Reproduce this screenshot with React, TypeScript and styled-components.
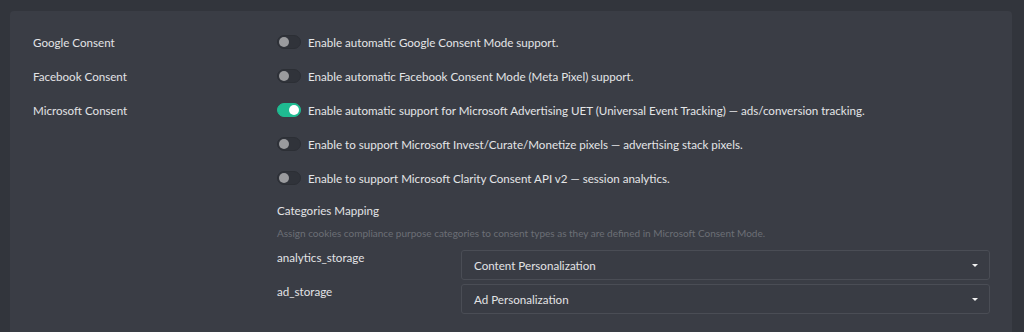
import React from 'react'
import styled, { createGlobalStyle } from 'styled-components'

const GlobalStyle = createGlobalStyle`
  html, body {
    margin: 0;
    padding: 0;
    background: #32353c;
  }
  body {
    font-family: Lato, 'Noto Sans', sans-serif;
    color: #e2e3e5;
  }
`

const Page = styled.div`
  padding: 11px 12px 0 10px;
  height: 332px;
  box-sizing: border-box;
  overflow: hidden;
`

const Panel = styled.section`
  background: #3a3d45;
  border-radius: 4px 4px 0 0;
  padding: 24px 0 20px 23px;
  min-height: 340px;
  box-sizing: border-box;
`

const Row = styled.div`
  display: grid;
  grid-template-columns: 244px 1fr;
  align-items: start;
`

const Label = styled.div`
  font-size: 11.6px;
  line-height: 14px;
  padding-top: 1px;
`

const Options = styled.div`
  display: flex;
  flex-direction: column;
`

const Option = styled.label`
  display: flex;
  align-items: center;
  gap: 7px;
  height: 14px;
  margin-bottom: 20px;
  font-size: 11.6px;
  color: #e4e5e7;
`

const Track = styled.span<{ $on?: boolean }>`
  position: relative;
  width: 24px;
  height: 14px;
  border-radius: 7px;
  box-sizing: border-box;
  background: ${(p) => (p.$on ? '#1fbc92' : '#30333a')};
  border: 1px solid ${(p) => (p.$on ? '#1fbc92' : '#2c2f35')};
  flex-shrink: 0;

  &::after {
    content: '';
    position: absolute;
    top: 1px;
    left: ${(p) => (p.$on ? '11px' : '1px')};
    width: 10px;
    height: 10px;
    border-radius: 50%;
    background: ${(p) => (p.$on ? '#ffffff' : '#9a9b9e')};
  }
`

const Mapping = styled.div`
  margin-top: -1px;
  padding-right: 22px;
`

const Heading = styled.div`
  font-size: 11.6px;
  line-height: 14px;
  margin-bottom: 9px;
`

const Hint = styled.div`
  font-size: 10px;
  line-height: 12px;
  color: #6c6f76;
  margin-bottom: 11px;
`

const MapRow = styled.div`
  display: grid;
  grid-template-columns: 184px 1fr;
  align-items: start;
  margin-bottom: 4px;
`

const MapLabel = styled.div`
  font-size: 11.6px;
  line-height: 14px;
  padding-top: 1px;
`

const Select = styled.div`
  display: flex;
  align-items: center;
  justify-content: space-between;
  height: 30px;
  box-sizing: border-box;
  border: 1px solid #4a4d55;
  border-radius: 3px;
  background: #393c44;
  padding: 0 11px 0 12px;
  font-size: 11.6px;
  color: #e2e3e5;
`

const Caret = styled.span`
  width: 0;
  height: 0;
  border-left: 3.5px solid transparent;
  border-right: 3.5px solid transparent;
  border-top: 3.5px solid #f2f2f2;
`

const Toggle: React.FC<{ on?: boolean; text: string }> = ({ on, text }) => (
  <Option>
    <Track $on={on} />
    {text}
  </Option>
)

export default function App() {
  return (
    <>
      <GlobalStyle />
      <Page>
        <Panel>
          <Row>
            <Label>Google Consent</Label>
            <Options>
              <Toggle text='Enable automatic Google Consent Mode support.' />
            </Options>
          </Row>
          <Row>
            <Label>Facebook Consent</Label>
            <Options>
              <Toggle text='Enable automatic Facebook Consent Mode (Meta Pixel) support.' />
            </Options>
          </Row>
          <Row>
            <Label>Microsoft Consent</Label>
            <Options>
              <Toggle
                on
                text='Enable automatic support for Microsoft Advertising UET (Universal Event Tracking) — ads/conversion tracking.'
              />
              <Toggle text='Enable to support Microsoft Invest/Curate/Monetize pixels — advertising stack pixels.' />
              <Toggle text='Enable to support Microsoft Clarity Consent API v2 — session analytics.' />
              <Mapping>
                <Heading>Categories Mapping</Heading>
                <Hint>
                  Assign cookies compliance purpose categories to consent types as they are defined in
                  Microsoft Consent Mode.
                </Hint>
                <MapRow>
                  <MapLabel>analytics_storage</MapLabel>
                  <Select>
                    Content Personalization
                    <Caret />
                  </Select>
                </MapRow>
                <MapRow>
                  <MapLabel>ad_storage</MapLabel>
                  <Select>
                    Ad Personalization
                    <Caret />
                  </Select>
                </MapRow>
              </Mapping>
            </Options>
          </Row>
        </Panel>
      </Page>
    </>
  )
}
